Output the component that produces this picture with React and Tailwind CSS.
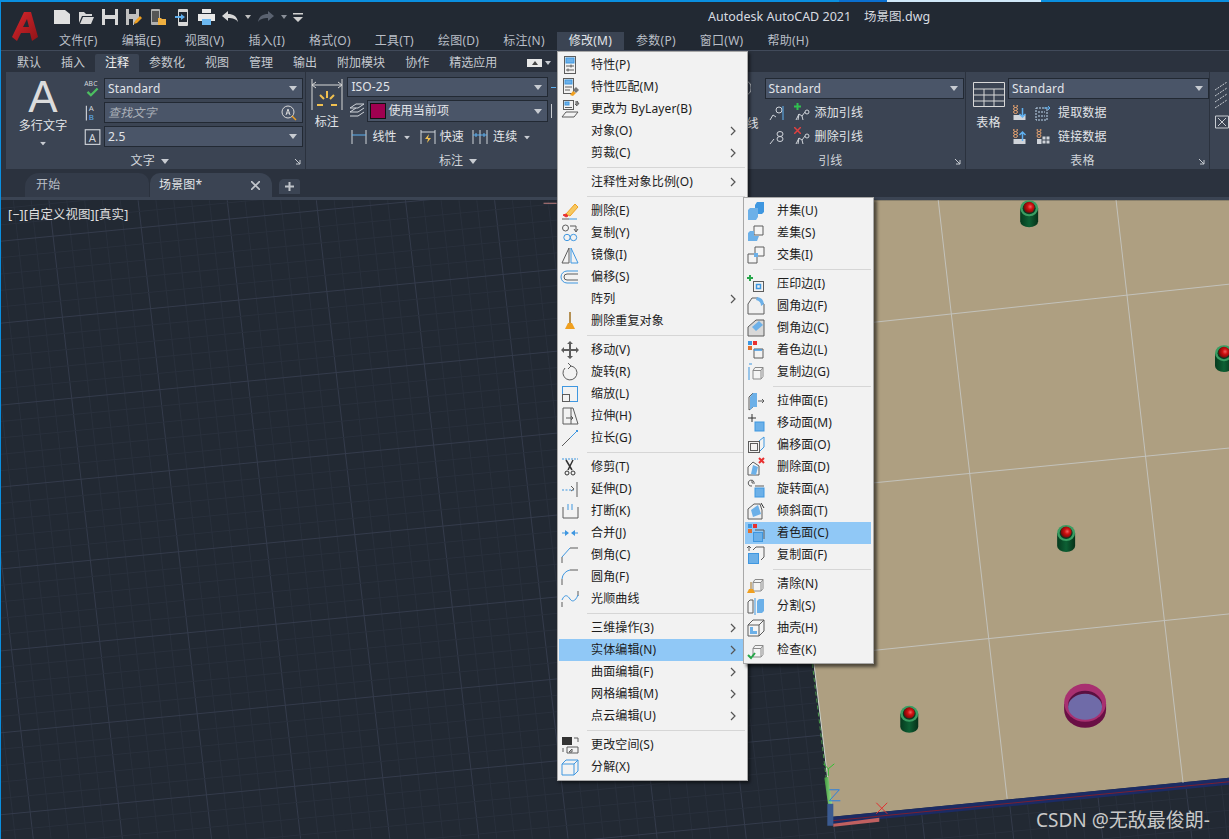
import React from 'react';

const G = '#5c5c5c';
const B = '#3f97e0';
const L = '#6cb0e8';
const O = '#f0a020';
const R = '#e83030';

const MenuIcon = ({ children }) => (
  <svg viewBox="0 0 20 20" className="w-5 h-5 ml-px shrink-0" fill="none" stroke={G} strokeWidth="1">
    {children}
  </svg>
);

const cube = (
  <path d="M7 8.5l2-3h8v9l-2 2.5H7z M7 8.5h8v8 M15 8.5l2-3" fill="#f4f4f4" stroke="#8a8a8a" />
);

const icons = {
  props: <><rect x="4.5" y="1.5" width="11" height="17" /><rect x="6" y="3" width="8" height="5" fill={L} stroke={B} /><path d="M6 11h8M6 15h8M11 9.5v3M8 13.5v3" /></>,
  match: <><rect x="3.5" y="1.5" width="10" height="15" /><rect x="5" y="3" width="7" height="4" fill={L} stroke={B} /><path d="M5 10h7M5 13h5" /><path d="M10 18l3-4 3 2-3 3z" fill={O} stroke="none" /><path d="M13 13l3-3 3 3-3 3z" fill="#777" stroke="none" /></>,
  bylayer: <><rect x="3.5" y="1.5" width="10" height="9" /><rect x="5" y="3" width="4" height="3" fill={L} stroke={B} /><path d="M5 8.5h7M15 3h3M17 2v5l-2-2h4z" /><path d="M2 18l4-5h12l-4 5z" /></>,
  erase: <><path d="M6 13L15 3l3 3-8 9z" fill="#f7c860" stroke={O} /><path d="M3 14l3-1 2 2-2 1z" fill={R} stroke={R} /><path d="M2 18h7" stroke={G} /><path d="M9 18h8" stroke={B} /></>,
  copy: <><circle cx="5.5" cy="5" r="3" /><path d="M10 3h6v5M14 6l2 3 2-3" /><circle cx="7" cy="14.5" r="3.2" stroke={B} /><circle cx="13.5" cy="14.5" r="3.2" stroke={B} /></>,
  mirror: <><path d="M9 3v15H2z" /><path d="M11 3v15h7z" stroke={B} /></>,
  offset: <><path d="M18 4H7a6 6 0 000 12h11" stroke={B} /><path d="M18 7H7a3 3 0 000 6h11" /></>,
  purge: <><path d="M10 1v11" stroke="#a07020" strokeWidth="1.5" /><path d="M8 12h4l3 6H5z" fill={O} stroke="none" /></>,
  move: <path d="M10 1l3 3h-2v5h5V7l3 3-3 3v-2h-5v5h2l-3 3-3-3h2v-5H4v2l-3-3 3-3v2h5V4H7z" fill={G} stroke="none" />,
  rotate: <><path d="M5 6A7 7 0 1011 4" /><path d="M8 1l3 3-3 3" /></>,
  scale: <><rect x="2.5" y="2.5" width="15" height="15" stroke={B} /><rect x="2.5" y="10.5" width="7" height="7" /></>,
  stretch: <><path d="M3 2h8v16H3z" /><path d="M11 2h2l5 16h-7" stroke={G} /><path d="M6 12h7M11 10l2 2-2 2" stroke={G} /></>,
  lengthen: <><path d="M2 18L16 4" stroke={G} /><path d="M10 10l6-6" stroke={B} /><rect x="16" y="2" width="2" height="2" fill={B} stroke="none" /></>,
  trim: <><path d="M2 2h16" stroke={B} strokeDasharray="2 1" /><path d="M6 3l6 10M13 3L8 13" stroke="#333" strokeWidth="1.5" /><circle cx="7" cy="16" r="2" stroke="#333" /><circle cx="13" cy="16" r="2" stroke="#333" /></>,
  extend: <><path d="M2 11h12" stroke={B} strokeDasharray="2 1.5" /><path d="M11 7l3 3-3 2" /><path d="M17 3v15" /></>,
  brk: <><path d="M3 6v11h15V6" /><path d="M8 3v6M12 3v6" stroke={B} /></>,
  join: <><path d="M2 10h6M12 10h6" stroke={B} /><path d="M5 7l4 3-4 3zM15 7l-4 3 4 3z" fill={B} stroke="none" /></>,
  chamfer: <><path d="M2 18v-6" /><path d="M2 12L10 3" stroke={B} /><path d="M10 3h8" /></>,
  fillet: <><path d="M2 18v-6" /><path d="M2 12a10 10 0 018-9" stroke={B} /><path d="M10 3h8" /></>,
  spline: <><path d="M2 18v-5M18 2v5" /><path d="M2 11c3-7 6-4 8-1s5 3 8-4" stroke={B} /></>,
  space: <><rect x="2" y="2" width="10" height="8" fill="#333" stroke="none" /><path d="M14 3h4v4M7 12h11v6H7zM3 13v4M9 17l3-3v3z" /></>,
  explode: <path d="M2 7h12v11H2zM2 7l4-4h12v11l-4 4M14 7l4-4" stroke={B} />,
  union: <><path d="M9 4l2-3h7v10l-2 2H9z" fill={B} stroke="none" /><path d="M2 9l2-2h8v9l-2 3H2z" fill={L} stroke="none" /></>,
  subtract: <><path d="M8 3h9v9H8z" fill="#f4f4f4" /><path d="M2 10l2-2h4v5h5l-2 5H2z" fill={L} stroke="none" /></>,
  intersect: <><path d="M9 2h9v9H9zM2 9h9v9H2z" fill="#f4f4f4" /><rect x="8" y="8" width="4" height="4" fill={L} stroke="none" /></>,
  imprint: <><path d="M4 1v6M1 4h6" stroke="#27a64a" strokeWidth="2" /><rect x="7.5" y="7.5" width="10" height="10" /><rect x="10.5" y="10.5" width="4" height="4" stroke={B} strokeWidth="1.5" /></>,
  filletEdge: <><path d="M2 8l4-6h6l6 6v10H2z" fill="#f0f0f0" /><path d="M11 1a8 8 0 017 7l-3 2a6 6 0 00-5-6z" fill={L} stroke="none" /></>,
  chamferEdge: <><path d="M2 9l8-7h8v16H2z" fill="#d8d8d8" /><path d="M6 9l7-6 4 4-7 6z" fill={L} stroke="none" /></>,
  colorEdge: <><rect x="2" y="1" width="4" height="4" fill={B} stroke="none" /><rect x="7" y="1" width="4" height="4" fill={R} stroke="none" /><rect x="2" y="6" width="4" height="4" fill="#e07030" stroke="none" /><path d="M8 9h9v9H8z" /><path d="M8 10h8" stroke={B} strokeWidth="1.5" /></>,
  copyEdge: <>{cube}<path d="M3 5v13M3 2h3" stroke={B} /></>,
  extrudeFace: <><path d="M3 6l4-4v14l-4 3z" /><path d="M7 2h4v14H7l-3 3V6z" fill={L} stroke="none" /><path d="M12 10h6M16 8l2 2-2 2" /></>,
  moveFace: <><path d="M6 1v8M2 5h8" stroke="#333" /><rect x="9" y="9" width="9" height="9" fill={L} stroke={B} /></>,
  offsetFace: <><rect x="2.5" y="6.5" width="11" height="11" /><rect x="4.5" y="8.5" width="7" height="7" /><path d="M13 6l5-4v10l-4 4" stroke={B} /></>,
  deleteFace: <><path d="M2 18v-8l5-5 6 4v9z" fill="#f4f4f4" /><path d="M5 17l2-9 5 2-2 8z" fill={L} stroke="none" /><path d="M13 1l5 5M18 1l-5 5" stroke={R} strokeWidth="2" /></>,
  rotateFace: <><path d="M8 3a3 3 0 10-2 4M6 1v3h3" /><rect x="9" y="9" width="9" height="9" fill={L} stroke={B} /><path d="M9 7h9" /></>,
  taperFace: <><path d="M2 8l6-5h6l2 6v9H2z" fill="#f0f0f0" /><path d="M7 16L5 9l7-5 3 9z" fill={L} stroke="none" /><path d="M15 2l3 5" stroke="#333" /></>,
  colorFace: <><rect x="2" y="1" width="4" height="4" fill={B} stroke="none" /><rect x="7" y="1" width="4" height="4" fill={R} stroke="none" /><rect x="2" y="6" width="4" height="4" fill="#e07030" stroke="none" /><path d="M9 7h9v9" /><rect x="7.5" y="9.5" width="9" height="9" fill={L} stroke={B} /></>,
  copyFace: <><path d="M7 5l3-3h8v10l-3 3" /><rect x="2.5" y="8.5" width="10" height="10" fill={L} stroke={B} /><path d="M3 1v5M1 3l2-2 2 2" /></>,
  clean: <>{cube}<path d="M5 8v7" stroke="#a07020" /><path d="M3 15h4l2 4H1z" fill={O} stroke="none" /></>,
  separate: <><path d="M2 6l2-2h3v13H2z" fill="#f4f4f4" /><path d="M9 2v17" stroke={B} /><path d="M11 5l2-2h5v12l-2 2h-5z" fill={L} stroke="none" /></>,
  shell: <><path d="M2 7l5-5h11v11l-5 5H2z M2 7h11v11 M13 7l5-5" fill="#f4f4f4" /><path d="M4 9h3v4h4v3H4z" fill={L} stroke="none" /></>,
  check: <>{cube}<path d="M2 15l3 3 4-5" stroke="#27a64a" strokeWidth="2" /></>,
};

const Chevron = () => (
  <svg viewBox="0 0 6 10" className="w-[6px] h-[10px] ml-auto mr-[9px]" fill="none" stroke="#555" strokeWidth="1.2">
    <path d="M1 1l4 4-4 4" />
  </svg>
);

const Item = ({ icon, label, more, active }) => (
  <div className={`h-[22px] flex items-center ${active ? 'bg-[#90c8f6]' : ''}`}>
    <div className="w-8 shrink-0">{icon && <MenuIcon>{icons[icon]}</MenuIcon>}</div>
    <span className="text-[12px] text-[#1c1c1c] whitespace-nowrap">{label}</span>
    {more ? <Chevron /> : null}
  </div>
);

const Sep = () => (
  <div className="h-[7px] flex items-center pl-7">
    <div className="h-px w-full bg-[#d6d6d6]" />
  </div>
);

const modifyMenu = [
  ['props', '特性(P)'], ['match', '特性匹配(M)'], ['bylayer', '更改为 ByLayer(B)'], [null, '对象(O)', 1], [null, '剪裁(C)', 1], 0,
  [null, '注释性对象比例(O)', 1], 0,
  ['erase', '删除(E)'], ['copy', '复制(Y)'], ['mirror', '镜像(I)'], ['offset', '偏移(S)'], [null, '阵列', 1], ['purge', '删除重复对象'], 0,
  ['move', '移动(V)'], ['rotate', '旋转(R)'], ['scale', '缩放(L)'], ['stretch', '拉伸(H)'], ['lengthen', '拉长(G)'], 0,
  ['trim', '修剪(T)'], ['extend', '延伸(D)'], ['brk', '打断(K)'], ['join', '合并(J)'], ['chamfer', '倒角(C)'], ['fillet', '圆角(F)'], ['spline', '光顺曲线'], 0,
  [null, '三维操作(3)', 1], [null, '实体编辑(N)', 1, 1], [null, '曲面编辑(F)', 1], [null, '网格编辑(M)', 1], [null, '点云编辑(U)', 1], 0,
  ['space', '更改空间(S)'], ['explode', '分解(X)'],
];

const solidMenu = [
  ['union', '并集(U)'], ['subtract', '差集(S)'], ['intersect', '交集(I)'], 0,
  ['imprint', '压印边(I)'], ['filletEdge', '圆角边(F)'], ['chamferEdge', '倒角边(C)'], ['colorEdge', '着色边(L)'], ['copyEdge', '复制边(G)'], 0,
  ['extrudeFace', '拉伸面(E)'], ['moveFace', '移动面(M)'], ['offsetFace', '偏移面(O)'], ['deleteFace', '删除面(D)'], ['rotateFace', '旋转面(A)'], ['taperFace', '倾斜面(T)'], ['colorFace', '着色面(C)', 0, 1], ['copyFace', '复制面(F)'], 0,
  ['clean', '清除(N)'], ['separate', '分割(S)'], ['shell', '抽壳(H)'], ['check', '检查(K)'],
];

const renderItems = (list) =>
  list.map((it, i) =>
    it === 0 ? <Sep key={i} /> : <Item key={i} icon={it[0]} label={it[1]} more={it[2]} active={it[3]} />
  );

const Caret = ({ className = '' }) => (
  <svg viewBox="0 0 8 5" className={`w-2 h-[5px] shrink-0 ${className}`} fill="#c8ccd2">
    <path d="M0 0h8L4 5z" />
  </svg>
);

const Combo = ({ text, className = '', italic, search, children }) => (
  <div className={`h-[21px] flex items-center bg-[#4a5568] border border-[#222933] pl-[3px] pr-[5px] ${className}`}>
    {children}
    <span className={`text-[12px] ${italic ? 'italic text-[#aab0b8]' : 'text-[#e2e4e8]'}`}>{text}</span>
    <span className="ml-auto" />
    {search ? (
      <svg viewBox="0 0 16 16" className="w-4 h-4" fill="none" stroke="#d8d8d8">
        <circle cx="7" cy="7" r="6" />
        <path d="M5 10l2-6 2 6M5.7 8h2.6" />
        <path d="M11 11l4 4" stroke={O} strokeWidth="1.5" />
      </svg>
    ) : (
      <Caret />
    )}
  </div>
);

const Footer = ({ title, corner, caret, className = '' }) => (
  <div className={`relative h-4 mt-auto flex items-center justify-center gap-[6px] ${className}`}>
    <span className="text-[12px] text-[#d0d4da]">{title}</span>
    {caret && <Caret />}
    {corner && (
      <svg viewBox="0 0 7 7" className="absolute right-[4px] top-[5px] w-[7px] h-[7px]" fill="none" stroke="#c8ccd2">
        <path d="M1 1l5 5M6 2v4H2" />
      </svg>
    )}
  </div>
);

const RibbonIcon = ({ children, className = 'w-4 h-4' }) => (
  <svg viewBox="0 0 16 16" className={`shrink-0 ${className}`} fill="none" stroke="#d0d4da">
    {children}
  </svg>
);

const leaderAdd = <path d="M2 15l3-6 3 2 3-4M11 7a2 2 0 104 0 2 2 0 10-4 0M5 9l-1 6M8 11l1 4" />;
const dataIcon = (
  <>
    <path d="M2 1a2 1.5 0 014 0 2 1.5 0 01-4 0zM2 4a2 1.5 0 014 0 2 1.5 0 01-4 0zM2 7a2 1.5 0 014 0 2 1.5 0 01-4 0z" stroke="#e0a070" />
    <path d="M2 10h12v5H2z" fill="#d0d4da" stroke="none" />
  </>
);

const QatSlot = ({ w, children }) => <div className={`flex justify-center shrink-0 ${w}`}>{children}</div>;

const Qat = () => (
  <div className="flex items-center">
    <QatSlot w="w-6">
      <svg viewBox="0 0 16 14" className="w-4 h-[14px]" fill="#e0e0e0"><path d="M0 0h11l5 4v10H0z" /></svg>
    </QatSlot>
    <QatSlot w="w-6">
      <svg viewBox="0 0 16 14" className="w-4 h-[14px]" fill="#d8d8d8"><path d="M1 2h5l2 2h6v2H4L1 13zM5 7h11l-3 7H2z" /></svg>
    </QatSlot>
    <QatSlot w="w-6">
      <svg viewBox="0 0 16 16" className="w-4 h-4" fill="#d8d8d8"><path d="M0 0h16v16H0zM3 0v6h10V0zM3 10v6h10v-6z" fillRule="evenodd" /></svg>
    </QatSlot>
    <QatSlot w="w-6">
      <svg viewBox="0 0 16 16" className="w-4 h-4" fill="#c0c0c0"><path d="M0 0h13v9l-5 5v2H0zM3 0v5h7V0zM3 10v6h4v-6z" fillRule="evenodd" /><path d="M8 15l1-3 5-5 2 2-5 5z" fill={O} /></svg>
    </QatSlot>
    <QatSlot w="w-6">
      <svg viewBox="0 0 16 17" className="w-4 h-[17px]"><rect x="1" y="0" width="9" height="16" rx="1" fill="#b0b0b0" /><rect x="2" y="2" width="7" height="11" fill="#555" /><path d="M8 9h3l1 1h4v6H8z" fill="#f0b040" /></svg>
    </QatSlot>
    <QatSlot w="w-6">
      <svg viewBox="0 0 14 17" className="w-[14px] h-[17px]"><rect x="3" y="0" width="10" height="17" rx="1" fill="#d8d8d8" /><rect x="4" y="3" width="8" height="10" fill="#222933" /><path d="M0 7h6V5l4 3-4 3V9H0z" fill="#5fb0f0" /></svg>
    </QatSlot>
    <QatSlot w="w-6">
      <svg viewBox="0 0 17 16" className="w-[17px] h-4"><rect x="4" y="0" width="9" height="4" fill="#e8e8e8" /><rect x="0" y="5" width="17" height="7" fill="#e8e8e8" /><rect x="4" y="10" width="9" height="6" fill="#6cb8f0" /></svg>
    </QatSlot>
    <QatSlot w="w-6">
      <svg viewBox="0 0 16 12" className="w-4 h-3" fill="#d8d8d8"><path d="M0 5l6-5v3c5 0 9 2 10 8-2-3-5-4-10-4v3z" /></svg>
    </QatSlot>
    <QatSlot w="w-3"><svg viewBox="0 0 6 4" className="w-[6px] h-1" fill="#c0c0c0"><path d="M0 0h6L3 4z" /></svg></QatSlot>
    <QatSlot w="w-6">
      <svg viewBox="0 0 16 12" className="w-4 h-3" fill="#5a6270"><path d="M16 5l-6-5v3C5 3 1 5 0 11c2-3 5-4 10-4v3z" /></svg>
    </QatSlot>
    <QatSlot w="w-3"><svg viewBox="0 0 6 4" className="w-[6px] h-1" fill="#8a8f98"><path d="M0 0h6L3 4z" /></svg></QatSlot>
    <QatSlot w="w-4">
      <svg viewBox="0 0 10 9" className="w-[10px] h-[9px]" fill="#d0d0d0"><path d="M0 0h10v1.5H0zM0 4h10L5 9z" /></svg>
    </QatSlot>
  </div>
);

const Logo = () => (
  <svg viewBox="0 0 26 30" className="w-[26px] h-[30px]">
    <defs>
      <linearGradient id="logoRed" x1="0" y1="0" x2="1" y2="1">
        <stop offset="0" stopColor="#d9262c" />
        <stop offset="1" stopColor="#8f1418" />
      </linearGradient>
    </defs>
    <path d="M0 25L12 0h7l7 25-6 4-2-8H9l-4 8zM11 15h6l-2-8z" fill="url(#logoRed)" fillRule="evenodd" />
  </svg>
);

const menus = ['文件(F)', '编辑(E)', '视图(V)', '插入(I)', '格式(O)', '工具(T)', '绘图(D)', '标注(N)', '修改(M)', '参数(P)', '窗口(W)', '帮助(H)'];
const tabs = ['默认', '插入', '注释', '参数化', '视图', '管理', '输出', '附加模块', '协作', '精选应用'];

// viewport drawing: grid lines follow the model's skew
const SX = 0.115;
const SY = -0.097;
const gridLines = [];
for (let i = -10; i < 90; i++) {
  const x0 = 48 + (89.2 * i) / 5;
  gridLines.push({ x1: x0, y1: 200, x2: x0 + SX * 639, y2: 839, major: i % 5 === 0 });
}
for (let i = -5; i < 80; i++) {
  const y0 = 241 + (82 * i) / 5;
  gridLines.push({ x1: 0, y1: y0, x2: 1229, y2: y0 + SY * 1229, major: i % 5 === 0 });
}

const Peg = ({ x, y }) => (
  <g>
    <path d={`M${x} ${y + 8}v13a9 6 0 0018 0v-13z`} fill="url(#pegBody)" />
    <ellipse cx={x + 9} cy={y + 8} rx="9" ry="8" fill="#3a9d62" />
    <ellipse cx={x + 9} cy={y + 8} rx="6.5" ry="6" fill="#0a3a20" />
    <circle cx={x + 9} cy={y + 7} r="5.5" fill="url(#pegBall)" />
  </g>
);

const ModelView = () => (
  <svg viewBox="0 200 1229 639" className="absolute inset-0 w-full h-full">
    <defs>
      <linearGradient id="pegBody" x1="0" y1="0" x2="1" y2="0">
        <stop offset="0" stopColor="#063a1e" />
        <stop offset="0.5" stopColor="#0d6034" />
        <stop offset="1" stopColor="#063018" />
      </linearGradient>
      <radialGradient id="pegBall" cx="0.6" cy="0.45" r="0.6">
        <stop offset="0" stopColor="#f06060" />
        <stop offset="0.4" stopColor="#d01010" />
        <stop offset="1" stopColor="#700808" />
      </radialGradient>
      <linearGradient id="ucsGreen" x1="0" y1="0" x2="1" y2="0">
        <stop offset="0" stopColor="#3f9a3f" />
        <stop offset="1" stopColor="#9be08a" />
      </linearGradient>
    </defs>
    {gridLines.map((l, i) => (
      <line key={i} x1={l.x1} y1={l.y1} x2={l.x2} y2={l.y2} stroke={l.major ? '#343b4b' : '#29303c'} strokeWidth="1" />
    ))}
    <polygon points="758,200 1229,200 1229,778 832,817" fill="#ae9f81" />
    <polygon points="832,817 1229,778 1229,785 832,824" fill="#1b2b64" />
    <line x1="832" y1="821" x2="1229" y2="782" stroke="#7a2030" strokeWidth="1" />
    <line x1="758" y1="200" x2="832" y2="817" stroke="#d0d8d0" strokeWidth="1" />
    <line x1="812" y1="664" x2="830" y2="812" stroke="#4a9a4a" strokeWidth="1" strokeDasharray="4 3" />
    {[
      [938, 200, 1007, 799],
      [1116, 200, 1183, 783],
      [800, 330, 1229, 284],
      [800, 490, 1229, 448],
      [810, 657, 1229, 614],
    ].map(([x1, y1, x2, y2], i) => (
      <line key={i} x1={x1} y1={y1} x2={x2} y2={y2} stroke="#c3c2bb" strokeWidth="1" />
    ))}
    <Peg x={1020} y={200} />
    <Peg x={1215} y={345} />
    <Peg x={1057} y={525} />
    <Peg x={900} y={706} />
    <path d="M1064 704v6a21 18 0 0042 0v-6z" fill="#6a0f45" />
    <ellipse cx="1085" cy="703" rx="21" ry="19" fill="#a83070" />
    <ellipse cx="1085" cy="705" rx="17" ry="14" fill="#5a1040" />
    <ellipse cx="1085" cy="707" rx="17" ry="13" fill="#6f6ba8" />
    <path d="M824 778l4-1 4 30-3 7z" fill="url(#ucsGreen)" />
    <rect x="827" y="804" width="6" height="22" fill="#3a5a90" />
    <path d="M833 824l46-6 0 4-46 5z" fill="#c06060" />
    <path d="M823 764l5 5 6-5M828 769v7" fill="none" stroke="#30c030" />
    <path d="M829 790h10l-10 11h11" fill="none" stroke="#2a80e0" />
    <path d="M876 803l11 11M887 803l-11 11" stroke="#e03030" />
    <line x1="543" y1="203" x2="556" y2="203" stroke="#c08080" />
  </svg>
);

export default function App() {
  return (
    <div className="relative w-[1229px] h-[839px] overflow-hidden flex flex-col bg-[#222933] border-l border-[#0a8fe0] font-['Noto_Sans','Noto_Sans_CJK_SC',sans-serif] text-[12px] tracking-[0.15px]">
      {/* Window top edge */}
      <div className="h-[2px] shrink-0 flex bg-[#0a8fe0]">
        <div className="w-[838px]" />
        <div className="w-[48px] bg-[#0a6fd0]" />
        <div className="w-[154px] bg-[#d0e8f8]" />
      </div>

      {/* Title bar */}
      <div className="h-[49px] shrink-0 flex border-b border-b-[#414a5a]">
        <div className="w-[49px] shrink-0 pl-[11px] pt-[10px]">
          <Logo />
        </div>
        <div className="flex-1 flex flex-col">
          <div className="h-[30px] flex items-center">
            <Qat />
            <span className="ml-[402px] text-[12.5px] tracking-normal text-[#d8dbe0] whitespace-nowrap">Autodesk AutoCAD 2021&nbsp;&nbsp;&nbsp;&nbsp;场景图.dwg</span>
          </div>
          <div className="h-[18px] flex -ml-[3px] tracking-[0.25px]">
            {menus.map((m, i) => (
              <div key={i} className={`px-3 flex items-center whitespace-nowrap ${i === 8 ? 'bg-[#3b4453] text-[#e2e4e8]' : 'text-[#b9bec6]'}`}>
                {m}
              </div>
            ))}
          </div>
        </div>
      </div>

      {/* Ribbon tabs */}
      <div className="h-[21px] shrink-0 flex items-end pl-[6px] bg-[#2b323e] tracking-normal">
        {tabs.map((t, i) => (
          <div key={i} className={`h-[18px] px-[10px] flex items-center rounded-t-[2px] whitespace-nowrap ${i === 2 ? 'bg-[#3b4453] text-[#f0f0f0]' : 'text-[#c5c9cf]'}`}>
            {t}
          </div>
        ))}
        <div className="ml-[20px] mb-[5px] w-[15px] h-[8px] bg-[#e8e8e8] flex items-center justify-center">
          <svg viewBox="0 0 6 4" className="w-[6px] h-1" fill="#444"><path d="M3 0l3 4H0z" /></svg>
        </div>
        <svg viewBox="0 0 6 4" className="w-[6px] h-1 ml-[3px] mb-[7px]" fill="#c8ccd2"><path d="M0 0h6L3 4z" /></svg>
      </div>

      {/* Ribbon panels */}
      <div className="h-[97px] shrink-0 flex gap-px pl-[5px] bg-[#2b323e]">
        <div className="w-[300px] bg-[#3b4453] flex flex-col">
          <div className="flex pt-[6px]">
            <div className="w-[74px] flex flex-col items-center">
              <span className="h-[38px] leading-[38px] text-[44px] font-['Liberation_Sans',sans-serif] text-[#dcdcdc]">A</span>
              <span className="mt-[1px] text-[#e2e4e8]">多行文字</span>
              <Caret className="mt-[6px] scale-75" />
            </div>
            <div className="w-[24px] flex flex-col items-center gap-[3px]">
              <RibbonIcon className="w-[18px] h-[21px]">
                <path d="M4 11l3 3 6-6" stroke="#4cc060" strokeWidth="2" />
                <text x="1" y="6" fontSize="6" fill="#d0d4da" stroke="none">ABC</text>
              </RibbonIcon>
              <RibbonIcon className="w-[18px] h-[21px]">
                <path d="M3 2v13" />
                <text x="5" y="7" fontSize="7" fill="#d0d4da" stroke="none">A</text>
                <text x="5" y="15" fontSize="7" fill="#5fb0f0" stroke="none">B</text>
              </RibbonIcon>
              <RibbonIcon className="w-[18px] h-[21px]">
                <rect x="2" y="2" width="13" height="13" />
                <text x="5" y="13" fontSize="10" fill="#d0d4da" stroke="none">A</text>
              </RibbonIcon>
            </div>
            <div className="w-[199px] flex flex-col gap-[3px]">
              <Combo text="Standard" />
              <Combo text="查找文字" italic search />
              <Combo text="2.5" />
            </div>
          </div>
          <Footer title="文字" corner caret className="pr-3" />
        </div>

        <div className="w-[304px] bg-[#3b4453] flex flex-col">
          <div className="flex pt-[5px]">
            <div className="w-[41px] flex flex-col items-center">
              <svg viewBox="0 0 32 32" className="w-8 h-8 mt-[1px]" fill="none" stroke="#d8d8d8">
                <path d="M1 1v31M31 1v31M1 7h30M5 4L1 7l4 3M27 4l4 3-4 3" />
                <path d="M16 13v7M9 17l4 4M23 17l-4 4M6 27h6M20 27h6" stroke="#f0c050" strokeWidth="2" />
              </svg>
              <span className="text-[#e2e4e8] mt-[3px]">标注</span>
            </div>
            <div className="flex-1 flex flex-col">
              <div className="flex items-center gap-[3px]">
                <Combo text="ISO-25" className="w-[201px] !h-[20px]" />
                <span className="w-[5px] h-px bg-[#5fb0f0]" />
              </div>
              <div className="flex items-center mt-[3px]">
                <RibbonIcon className="w-4 h-4 ml-[2px] mr-[2px]">
                  <path d="M1 5l6-4h8L9 5zM1 9l6-4M1 9h8l6-4M1 13h8l6-4" />
                </RibbonIcon>
                <Combo text="使用当前项" className="w-[181px] !pl-[2px] !h-[22px]">
                  <span className="w-4 h-4 mr-[2px] bg-[#a00050] border border-[#111]" />
                </Combo>
                <span className="w-px h-[14px] ml-[3px] bg-[#c8ccd2]" />
              </div>
              <div className="flex items-center mt-[5px] h-[20px] pl-[4px]">
                <RibbonIcon className="w-4 h-4">
                  <path d="M1 1v14M15 1v14" /><path d="M1 6h14" stroke="#5fb0f0" />
                </RibbonIcon>
                <span className="ml-[5px] text-[#e2e4e8]">线性</span>
                <Caret className="ml-[6px] scale-75" />
                <RibbonIcon className="w-4 h-4 ml-[9px]">
                  <path d="M1 1v14M15 1v14M1 3h14" /><path d="M9 5L5 10h3l-1 4 4-5H8z" fill="#f0c050" stroke="none" />
                </RibbonIcon>
                <span className="ml-[4px] text-[#e2e4e8]">快速</span>
                <RibbonIcon className="w-4 h-4 ml-[8px]">
                  <path d="M1 1v14M8 1v14M15 1v14" /><path d="M1 6h14M4 4v4M12 4v4" stroke="#5fb0f0" />
                </RibbonIcon>
                <span className="ml-[5px] text-[#e2e4e8]">连续</span>
                <Caret className="ml-[6px] scale-75" />
              </div>
            </div>
          </div>
          <Footer title="标注" caret />
        </div>

        <div className="w-[84px] bg-[#3b4453]" />

        <div className="w-[270px] bg-[#3b4453] flex flex-col">
          <div className="flex pt-[6px]">
            <div className="w-[69px] pl-[51px] flex flex-col">
              <svg viewBox="0 0 4 16" className="w-1 h-4 mt-[2px]" fill="none" stroke="#c8ccd2"><path d="M0 1a8 8 0 010 14" /></svg>
              <span className="text-[#e2e4e8] mt-[19px]">线</span>
            </div>
            <div className="flex-1 flex flex-col">
              <Combo text="Standard" className="w-[199px]" />
              <div className="flex items-center mt-[4px] h-[20px] pl-[3px]">
                <RibbonIcon><path d="M2 15l3-5 3 2M8 5a3 3 0 106 0 3 3 0 10-6 0" /><path d="M15 1v14" stroke="#5fb0f0" /></RibbonIcon>
                <span className="relative ml-[10px] block w-4 h-4">
                  <RibbonIcon>{leaderAdd}</RibbonIcon>
                  <svg viewBox="0 0 7 7" className="absolute left-0 -top-[2px] w-[7px] h-[7px]" stroke="#30c050" strokeWidth="2"><path d="M3.5 0v7M0 3.5h7" /></svg>
                </span>
                <span className="ml-[5px] text-[#e2e4e8]">添加引线</span>
              </div>
              <div className="flex items-center mt-[4px] h-[20px] pl-[3px]">
                <RibbonIcon><path d="M2 15l4-5M9 5a3 2.5 0 106 0 3 2.5 0 10-6 0M9 10a3 2.5 0 106 0 3 2.5 0 10-6 0" /></RibbonIcon>
                <span className="relative ml-[10px] block w-4 h-4">
                  <RibbonIcon>{leaderAdd}</RibbonIcon>
                  <svg viewBox="0 0 7 7" className="absolute left-0 -top-[2px] w-[7px] h-[7px]" stroke="#e04040" strokeWidth="1.5"><path d="M0 0l7 7M7 0l-7 7" /></svg>
                </span>
                <span className="ml-[5px] text-[#e2e4e8]">删除引线</span>
              </div>
            </div>
          </div>
          <Footer title="引线" corner />
        </div>

        <div className="w-[243px] bg-[#3b4453] flex flex-col">
          <div className="flex pt-[6px]">
            <div className="w-[42px] pl-[3px] flex flex-col items-center">
              <svg viewBox="0 0 32 25" className="w-8 h-[25px] mt-[4px]" fill="none" stroke="#d8d8d8">
                <path d="M.5.5h31v24H.5zM.5 7h31M.5 13h31M.5 19h31M11 7v17M21 7v17" />
              </svg>
              <span className="text-[#e2e4e8] mt-[7px]">表格</span>
            </div>
            <div className="flex-1 flex flex-col">
              <Combo text="Standard" className="w-[201px]" />
              <div className="flex items-center mt-[4px] h-[20px] pl-[3px]">
                <RibbonIcon className="w-[17px] h-4">{dataIcon}<path d="M11 3v9M8 9l3 3 3-3" stroke="#5fb0f0" strokeWidth="1.5" /></RibbonIcon>
                <RibbonIcon className="w-4 h-4 ml-[7px]"><path d="M1 3h11v12H1zM3 7h7M3 11h7" stroke="#c0d8f0" strokeDasharray="2 1" /><path d="M9 3h6M13 1l2 2-2 2" stroke="#5fb0f0" /></RibbonIcon>
                <span className="ml-[7px] text-[#e2e4e8]">提取数据</span>
              </div>
              <div className="flex items-center mt-[4px] h-[20px] pl-[3px]">
                <RibbonIcon className="w-[17px] h-4">{dataIcon}<path d="M11 12V3M8 6l3-3 3 3" stroke="#5fb0f0" strokeWidth="1.5" /></RibbonIcon>
                <RibbonIcon className="w-4 h-4 ml-[7px]">{dataIcon}<path d="M7 7h8v8H7zM7 11h8M11 7v8" fill="#d0d4da" stroke="#3b4453" /></RibbonIcon>
                <span className="ml-[7px] text-[#e2e4e8]">链接数据</span>
              </div>
            </div>
          </div>
          <Footer title="表格" corner className="pr-[10px]" />
        </div>

        <div className="flex-1 bg-[#3b4453] pl-[5px] pt-[10px]">
          <svg viewBox="0 0 14 48" className="w-[14px] h-[48px]" fill="none" stroke="#c8ccd2">
            <path d="M0 8L12 0M0 14L12 6M0 20L12 12M0 26L12 18" strokeDasharray="2 1" />
            <path d="M.5 34h13v12H.5zM3 36l8 8M11 36l-8 8" />
          </svg>
        </div>
      </div>

      {/* Document tabs */}
      <div className="h-[28px] shrink-0 flex items-end pl-[24px] bg-[#2b323e]">
        <div className="w-[124px] h-[24px] rounded-tl-[14px] rounded-tr-[10px] bg-[#333b49] flex items-center pl-[11px] text-[#b9bec6]">开始</div>
        <div className="w-[122px] h-[24px] ml-[1px] rounded-tl-[10px] rounded-tr-[12px] bg-[#3b4453] flex items-center pl-[9px] pr-[12px] text-[#e2e4e8]">
          场景图*
          <svg viewBox="0 0 9 9" className="w-[9px] h-[9px] ml-auto" stroke="#c0c4ca" strokeWidth="1.6"><path d="M0 0l9 9M9 0L0 9" /></svg>
        </div>
        <div className="w-[21px] h-[15px] ml-[7px] mb-[3px] rounded-tl-[5px] rounded-tr-[3px] bg-[#3b4453] flex items-center justify-center">
          <svg viewBox="0 0 9 9" className="w-[9px] h-[9px]" stroke="#c0c4ca" strokeWidth="2"><path d="M4.5 0v9M0 4.5h9" /></svg>
        </div>
      </div>
      <div className="h-[3px] shrink-0 bg-[#3b4453]" />

      {/* Model space */}
      <div className="relative flex-1">
        <ModelView />
        <span className="absolute left-[7px] top-[6px] text-[12.4px] text-[#e0e0e0]">[−][自定义视图][真实]</span>
        <span className="absolute left-[1035px] top-[606px] text-[19px] leading-[28px] tracking-normal text-[#c9c9c9] whitespace-nowrap">CSDN @无敌最俊朗-</span>
      </div>

      {/* Modify menu */}
      <div className="absolute left-[556px] top-[51px] w-[191px] bg-[#f2f2f2] border border-[#a8a8a8] pt-[2px] pb-[2px] pl-px pr-[2px] shadow-[2px_2px_3px_rgba(0,0,0,0.55)]">
        {renderItems(modifyMenu)}
      </div>

      {/* Solid editing submenu */}
      <div className="absolute left-[742px] top-[197px] w-[131px] bg-[#f2f2f2] border border-[#a8a8a8] pt-[2px] pb-[2px] pl-px pr-[2px] shadow-[3px_3px_3px_rgba(0,0,0,0.55)]">
        {renderItems(solidMenu)}
      </div>
    </div>
  );
}
